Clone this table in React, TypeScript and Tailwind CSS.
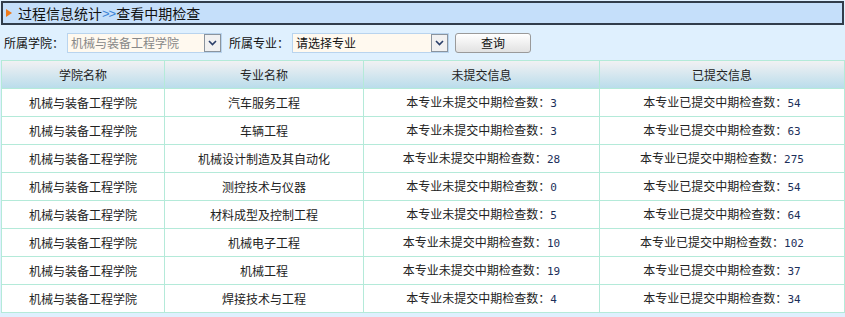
import React from "react";

const rows = [
  ["汽车服务工程", 3, 54],
  ["车辆工程", 3, 63],
  ["机械设计制造及其自动化", 28, 275],
  ["测控技术与仪器", 0, 54],
  ["材料成型及控制工程", 5, 64],
  ["机械电子工程", 10, 102],
  ["机械工程", 19, 37],
  ["焊接技术与工程", 4, 34],
];

const cjk = { fontFamily: '"SimSun","Noto Sans CJK SC","DejaVu Sans",sans-serif' };

function Chevron() {
  return (
    <svg width="9" height="6" viewBox="0 0 9 6">
      <path d="M1 1 L4.5 4.5 L8 1" fill="none" stroke="#2a3f6a" strokeWidth="1.6" />
    </svg>
  );
}

export default function App() {
  return (
    <div className="w-[845px] h-[317px] bg-[#dff0fe] overflow-hidden text-[12px] text-[#222]" style={cjk}>
      <div className="ml-[1px] mt-[1px] w-[843px] h-[24px] border-2 border-[#313d4b] bg-[#c5dffa] flex items-center">
        <svg width="6" height="8" viewBox="0 0 6 8" className="ml-[3px] mr-[6px]">
          <path d="M0 0 L6 4 L0 8 Z" fill="#f07a1a" />
        </svg>
        <span className="text-[14px] text-[#111] leading-none">过程信息统计</span>
        <span className="text-[13px] text-[#3c84d6] leading-none tracking-[-1px]" style={{ fontFamily: '"Liberation Sans",sans-serif' }}>&gt;&gt;</span>
        <span className="text-[14px] text-[#111] leading-none ml-[1px]">查看中期检查</span>
      </div>
      <div className="h-[35px] flex items-center pl-[4px]">
        <span className="text-[#111]">所属学院：</span>
        <div className="ml-[3px] w-[155px] h-[20px] border border-[#b9d4ee] bg-[#fff9ef] flex items-center">
          <span className="flex-1 pl-[3px] text-[#888] leading-none">机械与装备工程学院</span>
          <div className="w-[17px] h-[18px] border border-[#8a949e] bg-[#f1f1f1] flex items-center justify-center">
            <Chevron />
          </div>
        </div>
        <span className="ml-[7px] text-[#111]">所属专业：</span>
        <div className="ml-[3px] w-[157px] h-[20px] border border-[#b9d4ee] bg-[#fff9ef] flex items-center">
          <span className="flex-1 pl-[3px] text-[#111] leading-none">请选择专业</span>
          <div className="w-[17px] h-[18px] border border-[#8a949e] bg-[#f1f1f1] flex items-center justify-center">
            <Chevron />
          </div>
        </div>
        <button className="ml-[6px] w-[76px] h-[20px] rounded-[3px] border border-[#9a9a9a] bg-gradient-to-b from-[#ffffff] to-[#e2e2e2] text-[#111] text-[12px] leading-none">
          查询
        </button>
      </div>
      <table className="ml-[1px] w-[843px] border-collapse table-fixed">
        <colgroup>
          <col className="w-[163px]" />
          <col className="w-[199px]" />
          <col className="w-[236px]" />
          <col className="w-[245px]" />
        </colgroup>
        <thead>
          <tr className="h-[28px] bg-gradient-to-b from-[#f1f1f3] to-[#b8dceb]">
            {["学院名称", "专业名称", "未提交信息", "已提交信息"].map((h) => (
              <th key={h} className="border border-[#b4ead9] font-normal text-[#222] p-0">
                {h}
              </th>
            ))}
          </tr>
        </thead>
        <tbody>
          {rows.map(([name, a, b]) => (
            <tr key={name as string} className="h-[28px] bg-white">
              <td className="border border-[#b4ead9] text-center p-0">机械与装备工程学院</td>
              <td className="border border-[#b4ead9] text-center p-0">{name}</td>
              <td className="border border-[#b4ead9] text-center p-0">
                本专业未提交中期检查数：
                <span className="text-[11px] text-[#1c2f5a]" style={{ fontFamily: '"DejaVu Sans Mono",monospace' }}>{a}</span>
              </td>
              <td className="border border-[#b4ead9] text-center p-0">
                本专业已提交中期检查数：
                <span className="text-[11px] text-[#1c2f5a]" style={{ fontFamily: '"DejaVu Sans Mono",monospace' }}>{b}</span>
              </td>
            </tr>
          ))}
        </tbody>
      </table>
    </div>
  );
}
